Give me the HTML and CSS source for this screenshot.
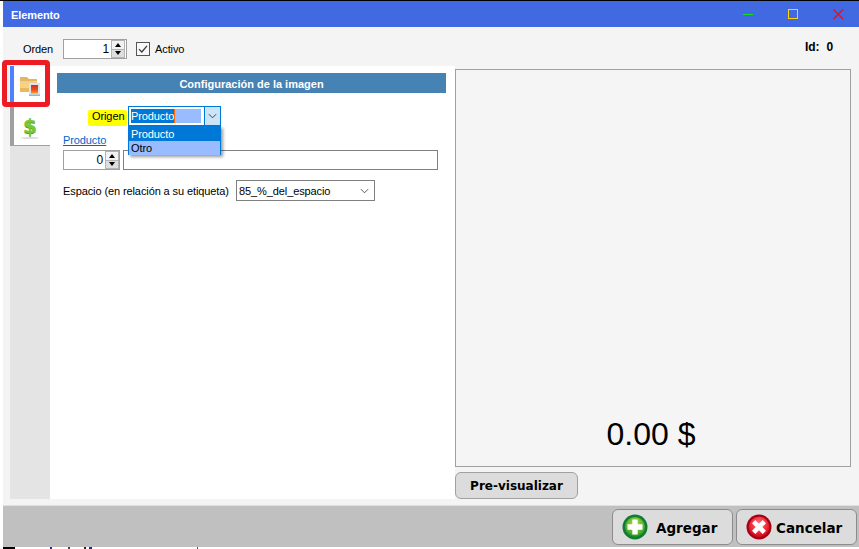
FILE: index.html
```html
<!DOCTYPE html>
<html lang="es">
<head>
<meta charset="utf-8">
<title>Elemento</title>
<link rel="stylesheet" href="styles.css">
</head>
<body>
<div class="app">
  <div class="window">
    <header class="titlebar">
      <span class="title">Elemento</span>
      <div class="controls">
        <svg class="ctl" viewBox="0 0 11 11"><path d="M0 5.5H10" stroke="#16e016" stroke-width="1"/></svg>
        <svg class="ctl" viewBox="0 0 11 11"><rect x=".5" y=".5" width="9" height="9" fill="none" stroke="#ffd400" stroke-width="1"/></svg>
        <svg class="ctl" viewBox="0 0 11 11"><path d="M.5 .5L10 10M10 .5L.5 10" stroke="#e3101c" stroke-width="1.2" fill="none"/></svg>
      </div>
    </header>

    <div class="toolbar">
      <span class="lbl orden">Orden</span>
      <div class="spin spin-orden">
        <span class="spin-val">1</span>
        <span class="spin-btns"><i class="up"></i><i class="down"></i></span>
      </div>
      <span class="check">
        <svg viewBox="0 0 12 12"><path d="M2 6.2L4.8 9L10 2.8" fill="none" stroke="#333" stroke-width="1.2"/></svg>
      </span>
      <span class="lbl">Activo</span>
      <span class="idbox"><b>Id:</b><b>0</b></span>
    </div>

    <div class="main">
      <nav class="tabs">
        <div class="tab tab-on">
          <svg class="ico-folder" viewBox="0 0 20 20">
            <defs>
              <linearGradient id="pic" x1="0" y1="0" x2="0" y2="1"><stop offset="0" stop-color="#d92a1e"/><stop offset=".55" stop-color="#ee4a24"/><stop offset="1" stop-color="#f7a21e"/></linearGradient>
            </defs>
            <path d="M0 1H7L9 3H17V5H0Z" fill="#e4b562"/>
            <path d="M0 5H17V8H0Z" fill="#efcf93"/>
            <path d="M0 7H18V16H0Z" fill="#f8d27c"/>
            <path d="M0 12H9V16H0Z" fill="#e9b75c"/>
            <rect x="9" y="7" width="11" height="13" fill="#dbe5ee"/>
            <rect x="9" y="18.5" width="11" height="1.5" fill="#9fb1c4"/>
            <rect x="11" y="9" width="7" height="8.5" fill="url(#pic)"/>
          </svg>
        </div>
        <div class="tab tab-off">
          <span class="dollar">$</span>
          <span class="dollar-shadow"></span>
        </div>
        <div class="tab-rest"></div>
        <div class="red-frame"></div>
      </nav>

      <section class="panel">
        <h2 class="panel-head">Configuración de la imagen</h2>

        <div class="row row-origen">
          <span class="lbl mark">Origen</span>
          <div class="combo">
            <span class="combo-text"><span class="sel">Producto</span><span class="caret"></span></span>
            <span class="combo-arrow"><svg viewBox="0 0 10 6"><path d="M1 1L5 5L9 1" fill="none" stroke="#333" stroke-width="1"/></svg></span>
            <ul class="droplist">
              <li class="opt-a">Producto</li>
              <li class="opt-b">Otro</li>
            </ul>
          </div>
        </div>

        <a class="link">Producto</a>

        <div class="row row-prod">
          <div class="spin spin-prod">
            <span class="spin-val">0</span>
            <span class="spin-btns"><i class="up"></i><i class="down"></i></span>
          </div>
          <div class="textbox"></div>
        </div>

        <div class="row row-esp">
          <span class="lbl">Espacio (en relación a su etiqueta)</span>
          <div class="select">
            <span>85_%_del_espacio</span>
            <svg viewBox="0 0 10 6"><path d="M1 1L5 5L9 1" fill="none" stroke="#444" stroke-width="1"/></svg>
          </div>
        </div>
      </section>

      <section class="preview">
        <div class="preview-box"><span class="price">0.00 $</span></div>
        <button class="btn btn-prev">Pre-visualizar</button>
      </section>
    </div>

    <footer class="footer">
      <button class="btn btn-big btn-add">
        <svg class="round" viewBox="0 0 26 26">
          <defs><radialGradient id="g" cx=".5" cy=".35" r=".7"><stop offset="0" stop-color="#b6e04a"/><stop offset=".7" stop-color="#4fae2c"/><stop offset="1" stop-color="#0f7a2b"/></radialGradient></defs>
          <circle cx="13" cy="13" r="12.5" fill="#0f7d35"/>
          <circle cx="13" cy="13" r="10" fill="url(#g)"/>
          <path d="M10.3 5.5H15.7V10.3H20.5V15.7H15.7V20.5H10.3V15.7H5.5V10.3H10.3Z" fill="#fff"/>
        </svg>
        <span class="big-text">Agregar</span>
      </button>
      <button class="btn btn-big btn-cancel">
        <svg class="round" viewBox="0 0 26 26">
          <defs><radialGradient id="r" cx=".5" cy=".35" r=".7"><stop offset="0" stop-color="#ff7a80"/><stop offset=".7" stop-color="#e81c2c"/><stop offset="1" stop-color="#b00014"/></radialGradient></defs>
          <circle cx="13" cy="13" r="12.5" fill="#a80012"/>
          <circle cx="13" cy="13" r="10.3" fill="url(#r)"/>
          <path d="M9.3 6L13 9.7L16.7 6L20 9.3L16.3 13L20 16.7L16.7 20L13 16.3L9.3 20L6 16.7L9.7 13L6 9.3Z" fill="#fff"/>
        </svg>
        <span class="big-text">Cancelar</span>
      </button>
    </footer>

    <div class="strip">
      <i class="m m1"></i><i class="m m2"></i><i class="m m3"></i><i class="m m4"></i><i class="m m5"></i><i class="m m6"></i>
    </div>
  </div>
</div>
</body>
</html>
```

FILE: styles.css
```css
* { box-sizing: border-box; }
html, body { margin: 0; padding: 0; background: #fff; }
body { font-family: "Liberation Sans", Arial, sans-serif; font-size: 11px; letter-spacing: -0.1px; color: #000; }

.app { width: 859px; height: 549px; overflow: hidden; border-top: 1px solid #000; padding-left: 3px; background: #fff; }
.window { height: 548px; display: flex; flex-direction: column; background: #f4f4f4; }

.titlebar { flex: 0 0 26px; background: #4169e1; display: flex; align-items: center; padding-left: 8px; color: #fff; }
.title { font-weight: bold; font-size: 11px; margin-top: 1px; }
.controls { margin-left: auto; display: flex; gap: 34px; padding-right: 15px; margin-top: 1px; }
.ctl { width: 11px; height: 11px; display: block; }

.toolbar { flex: 0 0 39px; display: flex; align-items: center; padding: 5px 26px 0 20px; }
.lbl { white-space: nowrap; }
.orden { width: 40px; }
.spin { display: flex; align-items: center; background: #fff; border: 1px solid #a0a0a0; height: 20px; padding-right: 1px; }
.spin-orden { width: 64px; }
.spin-prod { width: 57px; padding-right: 0; }
.spin-val { flex: 1; text-align: right; padding-right: 2px; font-size: 12px; }
.spin-btns { width: 14px; display: flex; flex-direction: column; height: 18px; }
.spin-btns i { flex: 1; display: flex; align-items: center; justify-content: center; border: 1px solid #b4b4b4; }
.spin-btns .up { background: #f2f2f2; }
.spin-btns .down { background: #dedede; border-top: 0; }
.spin-btns i::after { content: ""; border-left: 3.5px solid transparent; border-right: 3.5px solid transparent; }
.spin-btns .up::after { border-bottom: 4px solid #000; }
.spin-btns .down::after { border-top: 4px solid #000; }

.check { width: 14px; height: 14px; border: 1px solid #555; margin: 0 5px 0 9px; background: #f8f8f8; display: block; }
.check svg { display: block; width: 12px; height: 12px; }
.idbox { margin-left: auto; display: flex; gap: 7px; margin-top: -5px; font-size: 12px; }

.main { flex: 0 0 433px; display: flex; }

.tabs { position: relative; flex: 0 0 47px; padding-left: 7px; display: flex; flex-direction: column; }
.tab { width: 40px; }
.tab-on { height: 41px; background: #fff; border-left: 4px solid #4f81ff; display: flex; justify-content: flex-start; padding: 10px 0 0 6px; }
.ico-folder { width: 20px; height: 20px; display: block; }
.tab-off { height: 39px; background: #fff; border-left: 4px solid #a0a0a0; border-bottom: 1px solid #a0a0a0; display: flex; flex-direction: column; align-items: center; padding-right: 4px; }
.dollar { font-family: "DejaVu Sans", sans-serif; font-weight: bold; font-size: 20px; line-height: 24px; color: #78c832; margin-top: 7px; text-shadow: 0 1px 0 #4f9a20; }
.dollar-shadow { width: 18px; height: 2px; background: #dcdcdc; border-radius: 50%; margin-top: -1px; }
.tab-rest { flex: 1; width: 40px; background: #e4e4e4; }
.red-frame { position: absolute; left: -1px; top: -6px; width: 48px; height: 47px; border: 5px solid #ed1c24; border-radius: 4px; }

.panel { flex: 0 0 405px; background: #fff; padding: 7px 9px 0 7px; }
.panel-head { margin: 0; height: 20px; background: #4682b4; color: #fff; font-size: 11px; letter-spacing: 0; font-weight: bold; text-align: center; line-height: 22px; }
.row { display: flex; align-items: center; }
.row-origen { margin-top: 13px; height: 20px; padding-left: 31px; }
.mark { background: #ffff00; padding: 0 0 0 4px; margin: 4px 1px 0 0; height: 16px; line-height: 12px; width: 39px; border-radius: 2px; }
.combo { position: relative; width: 93px; height: 20px; border: 1px solid #0078d7; background: #fff; display: flex; }
.combo-text { flex: 1; margin: 2px 3px 2px 2px; background: #99bbff; display: flex; height: 14px; line-height: 14px; }
.sel { background: #0078d7; color: #fff; display: block; }
.caret { width: 1px; background: #ff6a00; }
.combo-arrow { width: 16px; background: #cce4f7; border-left: 1px solid #0078d7; display: flex; align-items: center; justify-content: center; }
.combo-arrow svg { width: 9px; height: 6px; }
.droplist { position: absolute; left: -1px; top: 19px; width: 93px; margin: 0; padding: 0; list-style: none; border: 1px solid #0078d7; background: #fff; box-shadow: 2px 2px 3px rgba(0,0,0,.4); }
.droplist li { height: 14px; line-height: 15px; padding-left: 2px; }
.opt-a { background: #0078d7; color: #fff; }
.opt-b { background: #99bbff; margin-bottom: -1px; }

.link { display: block; width: fit-content; margin: 8px 0 0 6px; height: 13px; line-height: 13px; color: #0066cc; text-decoration: underline; }
.row-prod { margin: 3px 0 0 6px; gap: 3px; }
.textbox { width: 315px; height: 20px; border: 1px solid #808080; background: #fff; }
.row-esp { margin: 10px 0 0 6px; height: 21px; }
.row-esp .lbl { width: 173px; }
.select { width: 139px; height: 21px; border: 1px solid #808080; background: #fff; display: flex; align-items: center; justify-content: space-between; padding: 0 5px 0 2px; }
.select svg { width: 9px; height: 6px; }

.preview { flex: 1; display: flex; flex-direction: column; padding: 3px 8px 0 0; }
.preview-box { height: 398px; border: 1px solid #a0a0a0; background: #f5f5f5; display: flex; align-items: flex-end; justify-content: center; padding: 0 4px 13px 0; }
.price { font-size: 32px; letter-spacing: 0; line-height: 38px; }
.btn { font-family: "DejaVu Sans", sans-serif; font-weight: bold; letter-spacing: 0; background: #dcdcdc; border: 1px solid #a0a0a0; border-radius: 6px; color: #000; padding: 0; }
.btn-prev { width: 123px; height: 27px; margin-top: 5px; font-size: 12px; }

.footer { flex: 0 0 42px; margin-top: 6px; background: #c0c0c0; border-top: 1px solid #e0e0e0; display: flex; justify-content: flex-end; gap: 3px; padding: 3px 2px 1px 0; }
.btn-big { width: 121px; height: 36px; display: flex; align-items: center; font-size: 13.5px; border-color: #8c8c8c; }
.big-text { margin-top: 2px; }
.btn-add { padding-left: 9px; gap: 8px; }
.btn-cancel { padding-left: 9px; gap: 4px; }
.round { width: 26px; height: 26px; display: block; }

.strip { flex: 1; display: flex; background: #fff; margin-left: -3px; align-items: flex-start; padding-left: 3px; }
.m { display: block; height: 2px; }
.m1 { width: 12px; background: #000; }
.m2 { width: 2px; margin-left: 35px; background: #2222aa; }
.m3 { width: 2px; margin-left: 16px; background: #444; }
.m4 { width: 2px; margin-left: 14px; background: #222; }
.m5 { width: 3px; margin-left: 3px; background: #2222aa; }
.m6 { width: 1px; margin-left: 105px; background: #555; }
```
